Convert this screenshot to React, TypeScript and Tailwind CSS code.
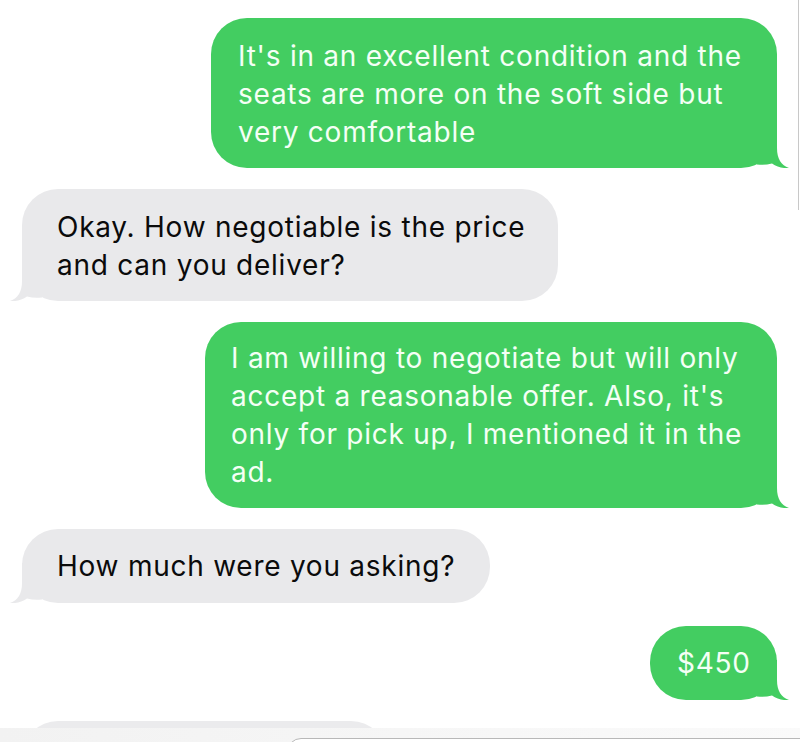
import React from "react";

const GREEN = "#43cd61";
const GRAY = "#e9e9eb";

function Tail({ color, side }: { color: string; side: "left" | "right" }) {
  return (
    <svg
      width="32"
      height="40"
      viewBox="0 0 32 40"
      className={
        side === "right"
          ? "absolute bottom-0 right-[-12px]"
          : "absolute bottom-0 left-[-12px] scale-x-[-1]"
      }
    >
      <path
        d="M0 0 H20 V20 C20 31 24 37 32 40 C26 40.6 20 39 15 35.5 C10 36.8 5 37 0 36.4 Z"
        fill={color}
      />
    </svg>
  );
}

function Sent({ lines, className }: { lines: string[]; className: string }) {
  return (
    <div
      className={`relative self-end mr-[23px] rounded-[36px] bg-[#43cd61] text-[#f4fff5] ${className}`}
    >
      <div className="relative z-10">
        {lines.map((l, i) => (
          <div key={i} className="whitespace-nowrap">
            {l}
          </div>
        ))}
      </div>
      <Tail color={GREEN} side="right" />
    </div>
  );
}

function Received({ lines, className }: { lines: string[]; className: string }) {
  return (
    <div
      className={`relative self-start ml-[22px] rounded-[36px] bg-[#e9e9eb] text-[#0b0b0b] ${className}`}
    >
      <div className="relative z-10">
        {lines.map((l, i) => (
          <div key={i} className="whitespace-nowrap">
            {l}
          </div>
        ))}
      </div>
      <Tail color={GRAY} side="left" />
    </div>
  );
}

export default function App() {
  return (
    <div
      className="relative w-[800px] h-[742px] overflow-hidden bg-white text-[28px] leading-[38px] tracking-[0.75px]"
      style={{ fontFamily: 'Inter, "Liberation Sans", Arial, sans-serif' }}
    >
      <div className="flex flex-col pt-[18px]">
        <Sent
          className="w-[566px] h-[150px] pl-[27px] pt-[19px]"
          lines={[
            "It's in an excellent condition and the",
            "seats are more on the soft side but",
            "very comfortable",
          ]}
        />
        <Received
          className="mt-[21px] w-[536px] h-[112px] pl-[35px] pt-[19px]"
          lines={["Okay. How negotiable is the price", "and can you deliver?"]}
        />
        <Sent
          className="mt-[21px] w-[572px] h-[186px] pl-[26px] pt-[17px]"
          lines={[
            "I am willing to negotiate but will only",
            "accept a reasonable offer. Also, it's",
            "only for pick up, I mentioned it in the",
            "ad.",
          ]}
        />
        <Received
          className="mt-[21px] w-[468px] h-[74px] pl-[35px] pt-[18px]"
          lines={["How much were you asking?"]}
        />
        <Sent
          className="mt-[23px] w-[127px] h-[74px] pl-[27px] pt-[18px]"
          lines={["$450"]}
        />
        <div className="mt-[21px] ml-[22px] w-[365px] h-[80px] rounded-[36px] bg-[#ebebed]" />
      </div>

      {/* bottom input bar overlay */}
      <div className="absolute left-0 right-0 bottom-0 h-[14px] bg-gradient-to-r from-[#f2f2f2] to-[#fafafa]">
        <div className="absolute left-[287px] right-[-20px] top-[10px] h-[30px] rounded-[14px] border border-[#b8b8b8] bg-white" />
      </div>

      {/* thin vertical line at right edge */}
      <div className="absolute right-[1px] top-0 h-[210px] w-px bg-[#c8c8c8]" />
    </div>
  );
}
